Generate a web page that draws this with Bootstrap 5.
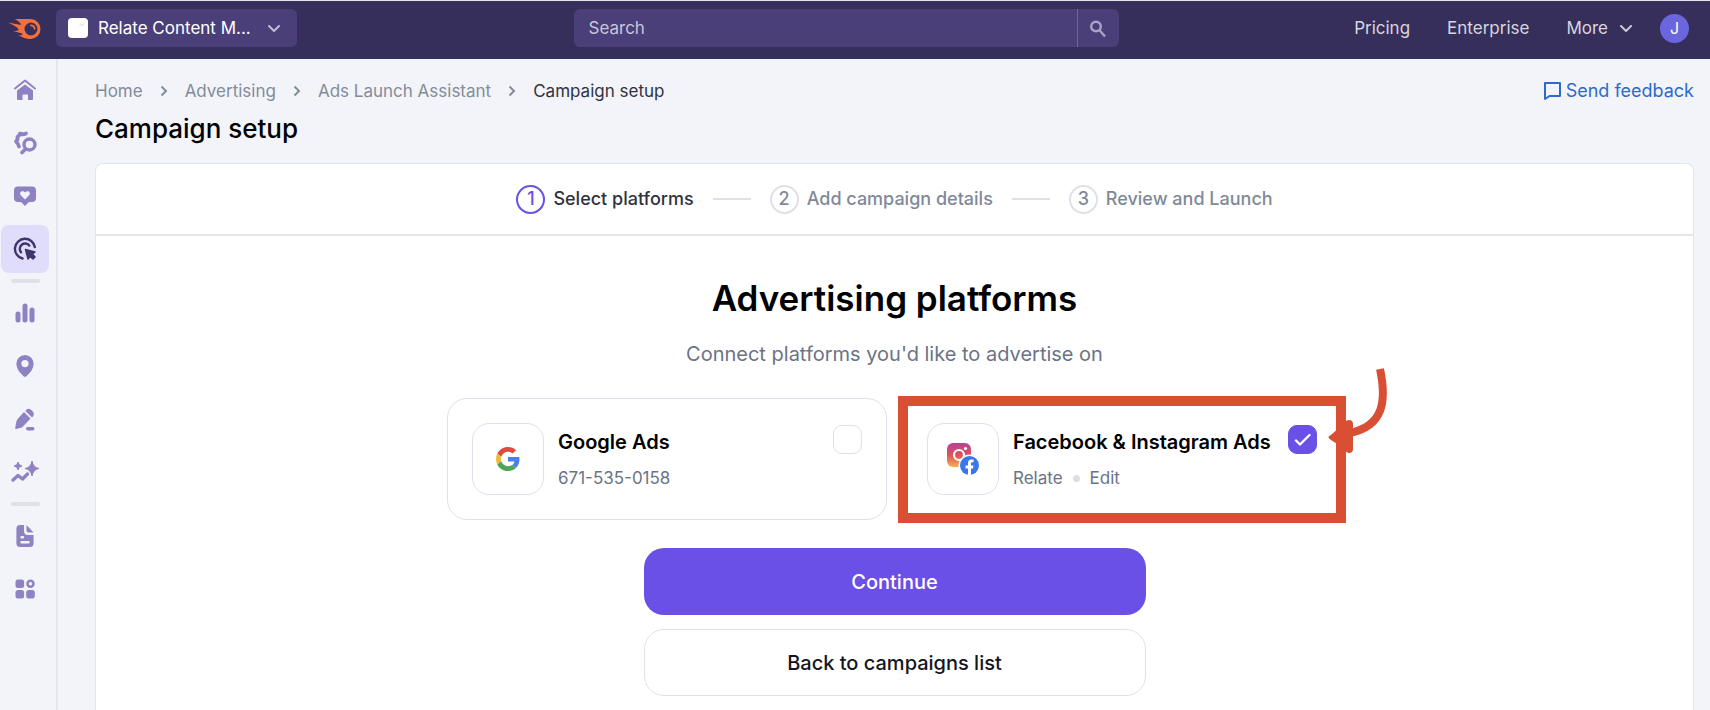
<!DOCTYPE html>
<html lang="en">
<head>
<meta charset="utf-8">
<meta name="viewport" content="width=device-width, initial-scale=1">
<title>Campaign setup</title>
<link href="https://cdn.jsdelivr.net/npm/bootstrap@5.3.0/dist/css/bootstrap.min.css" rel="stylesheet">
<style>
  body { background: #f3f4f9; font-family: Inter, "Open Sans", sans-serif; font-size: 18px; line-height: 24px; color: #2f3340; }
  a { text-decoration: none; }

  /* top bar */
  .topbar { height: 59px; padding: 0 21px 4px 3px; background: #372f5b; border-top: 1px solid #e4e4ea; font-size: 17px; }
  .topbar-side { flex: 1 1 0; min-width: 0; }
  .topbar-links { gap: 37px; }
  .brand-link { width: 53px; padding-left: 5px; }
  .project-btn { width: 241px; height: 38px; gap: 10px; border: 0; border-radius: 6px; background: #4b3f79; color: #fff; padding: 0 16px 0 12px; }
  .project-thumb { width: 20px; height: 20px; border-radius: 4px; background: #fff; }
  .search-box { width: 545px; height: 38px; border-radius: 6px; background: #4b3f79; overflow: hidden; }
  .search-box input { background: transparent; border: 0; color: #fff; padding: 0 15px; font-size: 17px; }
  .search-box input::placeholder { color: #c9c5da; opacity: 1; }
  .search-box button { width: 42px; border: 0; border-left: 1px solid #6f6596; background: transparent; color: #aaa3c6; }
  .topbar-link { color: #d7d5de; }
  .avatar { width: 29px; height: 29px; background: #6c66de; color: #fff; font-size: 16px; border: 0; }

  /* side rail */
  .rail { width: 58px; border-right: 2px solid #e4e6ee; padding: 7px 7px 0 1px; gap: 5px; }
  .rail-item { height: 48px; border-radius: 8px; color: #8f82c2; display: flex; align-items: center; justify-content: center; }
  .rail-item.current { background: #e0dcfb; color: #40346d; }
  .rail-sep { width: 29px; height: 4px; margin: 1px auto; border-radius: 2px; background: #dfe0e8; }

  /* content */
  .content { padding: 20px 16px 0 37px; }
  .crumbs { gap: 17px; font-size: 17px; }
  .crumbs a { color: #828c9b; }
  .feedback { color: #2d6ac9; }
  h1 { font-size: 26px; line-height: 32px; font-weight: 500; color: #000; margin: 10px 0 18px; }
  .panel { background: #fff; border: 1px solid #e4e6ee; border-bottom: 0; border-radius: 8px 8px 0 0; }
  .steps { height: 72px; border-bottom: 2px solid #e4e6ee; gap: 19px; font-weight: 500; color: #7f8999; }
  .step-num { width: 29px; height: 29px; border: 2px solid #e0e0ea; border-radius: 50%; }
  .step-now { color: #2f3340; }
  .step-now .step-num { border-color: #6a50e6; color: #6a50e6; }
  .step-line { width: 38px; height: 2px; background: #e0e0ea; }
  .setup { padding-top: 38px; }
  h2 { font-size: 35px; line-height: 48px; font-weight: 600; color: #000; }
  .intro { font-size: 20px; color: #6b7385; }
  .platforms { width: 100%; max-width: 895px; gap: 15px; }
  .platform { flex: 1 1 0; height: 122px; border: 1px solid #e0e1ec; border-radius: 20px; padding: 24px; }
  .platform-logo { width: 72px; height: 72px; border: 1px solid #e0e1ec; border-radius: 17px; }
  .platform-text { padding: 7px 0 0 14px; }
  .platform-name { font-size: 20px; font-weight: 600; color: #000; }
  .platform-info { font-size: 17px; }
  .platform-info, .platform-info a { color: #6b7385; }
  .dot { width: 7px; height: 7px; margin: 0 10px; border-radius: 50%; background: #dcdee8; }
  .form-check-input.pick { width: 29px; height: 29px; margin: 2px 0 0; border: 1px solid #dfe0ec; border-radius: 9px; flex-shrink: 0; }
  .form-check-input.pick:checked { background-color: #6a50e6; border-color: #6a50e6; background-size: 17px 17px;
    background-image: url("data:image/svg+xml,%3csvg xmlns='http://www.w3.org/2000/svg' viewBox='0 0 17 17'%3e%3cpath d='M2 9.500 6 13.500 15.500 4' fill='none' stroke='%23fff' stroke-width='2.400' stroke-linecap='round' stroke-linejoin='round'/%3e%3c/svg%3e"); }
  .actions { width: 100%; max-width: 502px; gap: 14px; }
  .action-btn { height: 67px; border-radius: 20px; font-size: 20px; font-weight: 500; }
  .action-main { --bs-btn-bg: #6a50e6; --bs-btn-color: #fff; --bs-btn-hover-bg: #5a41d4; --bs-btn-hover-color: #fff; }
  .action-back { --bs-btn-color: #14161f; --bs-btn-border-color: #e0e1ec; --bs-btn-hover-bg: #f7f7fb; }

  /* callout drawn over the second platform */
  .callout-frame { position: absolute; inset: -3px -5px -4px -5px; border: 10px solid #d94f34; pointer-events: none; }
  .callout-arrow { position: absolute; left: 423px; top: -32px; pointer-events: none; }
</style>
</head>
<body>
<div class="min-vh-100 d-flex flex-column">
  <header class="topbar d-flex align-items-center">
    <div class="topbar-side d-flex align-items-center">
      <a href="#" class="brand-link" aria-label="Dashboard">
        <svg width="34" height="22" viewBox="0 0 34 22" fill="#f2703d">
          <path fill-rule="evenodd" d="M0 4.500 13 7 Q13 4.500 7 1 H22.500 A10 10 0 0 1 22.500 21 C17 21 14 18.500 10 17.500 Q15.500 17.500 14 15.500 L5 13 Q11.500 13 10.500 11 Q8 8 0 4.500Z M23 4.500 A6.500 6.500 0 1 0 23 17.500 A6.500 6.500 0 1 0 23 4.500Z"/>
          <path d="M23 6.500 A4.500 4.500 0 0 1 27.500 11 C27.500 12 26 12 26 11 A3.500 3.500 0 0 0 23 8.200 C21.800 8.200 21.800 6.500 23 6.500Z"/>
        </svg>
      </a>
      <button type="button" class="project-btn d-flex align-items-center">
        <span class="project-thumb flex-shrink-0"><svg class="d-block" width="20" height="20" viewBox="0 0 20 20" fill="none" stroke="#bfe6c3"><path d="M11.500 8 13 6.500 14.500 7.500 16.500 5.500"/></svg></span>
        <span class="text-truncate">Relate Content M...</span>
        <svg class="ms-auto flex-shrink-0" width="14" height="9" viewBox="0 0 14 9" fill="none" stroke="#c3bdd9" stroke-width="2" stroke-linecap="round" stroke-linejoin="round"><path d="M2 2l5 5 5-5"/></svg>
      </button>
    </div>
    <form class="search-box d-flex" role="search">
      <input type="text" class="flex-grow-1" placeholder="Search" aria-label="Search">
      <button type="button" aria-label="Run search">
        <svg width="18" height="18" viewBox="0 0 18 18" fill="none" stroke="currentColor" stroke-width="2.400"><circle cx="7" cy="6.500" r="4.800"/><path d="M10.300 10 16 16.500"/></svg>
      </button>
    </form>
    <nav class="topbar-side d-flex align-items-center justify-content-end" aria-label="Account">
      <div class="topbar-links d-flex">
        <a href="#" class="topbar-link">Pricing</a>
        <a href="#" class="topbar-link">Enterprise</a>
        <a href="#" class="topbar-link">More<svg class="ms-2 me-4" width="20" height="9" viewBox="-4 0 20 9" fill="none" stroke="#c9c5da" stroke-width="2" stroke-linecap="round" stroke-linejoin="round"><path d="M1 1l5 5 5-5"/></svg></a>
      </div>
      <button type="button" class="avatar rounded-circle p-0">J</button>
    </nav>
  </header>

  <div class="d-flex flex-grow-1">
    <nav class="rail d-flex flex-column flex-shrink-0" aria-label="Sections">
      <a href="#" class="rail-item" aria-label="Home">
        <svg width="24" height="24" viewBox="0 0 24 24" fill="currentColor"><path d="M2 10.500 12 2.500 22 10.500" fill="none" stroke="currentColor" stroke-width="2" stroke-linecap="round" stroke-linejoin="round"/><path d="M4 12.500 12 6.500 20 12.500V21Q20 22 19 22H15V17.500Q15 16.500 14 16.500H10.500Q9.500 16.500 9.500 17.500V22H5Q4 22 4 21Z"/></svg>
      </a>
      <a href="#" class="rail-item" aria-label="SEO">
        <svg width="26" height="24" viewBox="0 0 26 24" fill="none" stroke="currentColor" stroke-linecap="round" stroke-linejoin="round"><circle cx="17.500" cy="13.500" r="5.500" stroke-width="3.400"/><path d="M13.500 18 10 21.500" stroke-width="3.600"/><path d="M7 15.500 Q6.500 13 4 10.500 Q6 9 5.500 6 L7.500 4 Q8.500 3 8 2.500 Q10.500 4 14 2.500" stroke-width="3.800"/></svg>
      </a>
      <a href="#" class="rail-item" aria-label="Social">
        <svg width="24" height="24" viewBox="0 0 24 24" fill="currentColor"><path fill-rule="evenodd" d="M5 2.500H19Q23 2.500 23 6.500V14Q23 18 19 18H17Q15 18 14 20L12 22 10 20Q9 18 7 18H5Q1 18 1 14V6.500Q1 2.500 5 2.500Z M12 15.500 L16.200 11.300 C18.500 8.500 14.500 5.500 12 8.500 C9.500 5.500 5.500 8.500 7.800 11.300Z"/></svg>
      </a>
      <a href="#" class="rail-item current" aria-label="Advertising" aria-current="page">
        <svg width="24" height="24" viewBox="0 0 24 24" fill="none" stroke="currentColor" stroke-width="2.400" stroke-linecap="round" stroke-linejoin="round"><path d="M9.500 21.500A10 10 0 1 1 21.800 10"/><path d="M8 15.300A5.300 5.300 0 1 1 16.300 8.500"/><path d="M12.500 12.500 22 15 19.500 17 22 20 20 22 17 19.500 15 22Z" fill="currentColor" stroke-width="1.500"/></svg>
      </a>
      <div class="rail-sep"></div>
      <a href="#" class="rail-item" aria-label="Traffic">
        <svg width="20" height="20" viewBox="0 0 20 20" fill="currentColor"><rect x=".5" y="8.500" width="5" height="11" rx="2.500"/><rect x="7.500" y=".5" width="5" height="19" rx="2.500"/><rect x="14.500" y="4.500" width="5" height="15" rx="2.500"/></svg>
      </a>
      <a href="#" class="rail-item" aria-label="Local">
        <svg width="18" height="22" viewBox="0 0 18 22" fill="currentColor"><path fill-rule="evenodd" d="M9 0A8.600 8.600 0 0 1 17.600 8.600C17.600 14 14 18 10.500 21.200Q9 22.400 7.500 21.200C4 18 .4 14 .4 8.600A8.600 8.600 0 0 1 9 0Z M9 5A3.600 3.600 0 1 0 9 12.200 3.600 3.600 0 1 0 9 5Z"/></svg>
      </a>
      <a href="#" class="rail-item" aria-label="Content">
        <svg width="22" height="24" viewBox="0 0 22 24" fill="currentColor"><path d="M10 5 16.500 11.500 9 19.500Q8 20.800 6 21L2 22Q1 22 1.200 21L2.200 15.500Q2.500 13.500 4 11.500Z"/><path d="M12 3Q15 .5 18 3.500T19 9.500L18 10.500 11.500 4Z"/><rect x="12" y="20" width="8.500" height="3.600" rx="1.800"/></svg>
      </a>
      <a href="#" class="rail-item" aria-label="Trends">
        <svg width="30" height="24" viewBox="0 0 30 24" fill="currentColor"><path d="M3 20 8 15.500 12.500 19 17.500 14" fill="none" stroke="currentColor" stroke-width="3.400" stroke-linecap="round" stroke-linejoin="round"/><path d="M22 1Q23 7.500 29 8.500 23 9.500 22 16 21 9.500 15 8.500 21 7.500 22 1Z" stroke="currentColor"/><path d="M8 2Q8.500 5.500 12 6 8.500 6.500 8 10 7.500 6.500 4 6 7.500 5.500 8 2Z" stroke="currentColor"/></svg>
      </a>
      <div class="rail-sep"></div>
      <a href="#" class="rail-item" aria-label="Reports">
        <svg width="18" height="22" viewBox="0 0 18 22" fill="currentColor"><path fill-rule="evenodd" d="M4 0H8V6Q8 10 12 10H17.600V18Q17.600 22 14 22H4Q.4 22 .4 18V4Q.4 0 4 0Z M5.500 11A1.200 1.200 0 0 0 5.500 13.400H7A1.200 1.200 0 0 0 7 11Z M5.500 16A1.200 1.200 0 0 0 5.500 18.400H12.500A1.200 1.200 0 0 0 12.500 16Z"/><path d="M10.500 0 17.600 7.500H12.500Q10.500 7.500 10.500 5.500Z"/></svg>
      </a>
      <a href="#" class="rail-item" aria-label="Apps">
        <svg width="20" height="20" viewBox="0 0 20 20" fill="currentColor"><rect x=".5" y=".5" width="8.600" height="8.600" rx="2.500"/><rect x=".5" y="11" width="8.600" height="8.600" rx="2.500"/><rect x="11.200" y="11" width="8.600" height="8.600" rx="2.500"/><circle cx="15.500" cy="4.800" r="3" fill="none" stroke="currentColor" stroke-width="2.500"/></svg>
      </a>
    </nav>

    <main class="content flex-grow-1 d-flex flex-column">
      <div class="d-flex align-items-center justify-content-between">
        <nav class="crumbs d-flex align-items-center" aria-label="breadcrumb">
          <a href="#">Home</a>
          <svg width="8" height="12" viewBox="0 0 8 12" fill="none" stroke="#828c9b" stroke-width="2"><path d="M1.500 1.500 6 6 1.500 10.500"/></svg>
          <a href="#">Advertising</a>
          <svg width="8" height="12" viewBox="0 0 8 12" fill="none" stroke="#828c9b" stroke-width="2"><path d="M1.500 1.500 6 6 1.500 10.500"/></svg>
          <a href="#">Ads Launch Assistant</a>
          <svg width="8" height="12" viewBox="0 0 8 12" fill="none" stroke="#828c9b" stroke-width="2"><path d="M1.500 1.500 6 6 1.500 10.500"/></svg>
          <span aria-current="page">Campaign setup</span>
        </nav>
        <a href="#" class="feedback d-flex align-items-center gap-1">
          <svg width="19" height="20" viewBox="0 0 19 20" fill="none" stroke="currentColor" stroke-width="2" stroke-linejoin="round"><path d="M2 2H17V15H6.500L2 18Z"/></svg>
          Send feedback
        </a>
      </div>
      <h1>Campaign setup</h1>

      <section class="panel flex-grow-1">
        <div class="steps d-flex align-items-center justify-content-center">
          <div class="step-now d-flex align-items-center gap-2"><span class="step-num d-flex align-items-center justify-content-center">1</span>Select platforms</div>
          <span class="step-line"></span>
          <div class="d-flex align-items-center gap-2"><span class="step-num d-flex align-items-center justify-content-center">2</span>Add campaign details</div>
          <span class="step-line"></span>
          <div class="d-flex align-items-center gap-2"><span class="step-num d-flex align-items-center justify-content-center">3</span>Review and Launch</div>
        </div>

        <div class="setup d-flex flex-column align-items-center">
          <h2 class="mb-0">Advertising platforms</h2>
          <p class="intro mt-3 mb-0 pt-1">Connect platforms you'd like to advertise on</p>

          <div class="platforms d-flex mt-4 pt-2">
            <div class="platform d-flex align-items-start">
              <div class="platform-logo d-flex align-items-center justify-content-center flex-shrink-0">
                <svg width="24" height="24" viewBox="0 0 48 48"><path fill="#dc4b3e" d="M24 9.500c3.540 0 6.710 1.220 9.210 3.600l6.850-6.850C35.900 2.380 30.470 0 24 0 14.620 0 6.510 5.380 2.560 13.220l7.980 6.190C12.430 13.720 17.740 9.500 24 9.500z"/><path fill="#4a80ee" d="M46.980 24.550c0-1.570-.15-3.090-.38-4.550H24v9.020h12.940c-.58 2.960-2.260 5.480-4.780 7.180l7.730 6c4.510-4.180 7.090-10.360 7.090-17.650z"/><path fill="#f0b93a" d="M10.530 28.590c-.48-1.450-.76-2.990-.76-4.590s.27-3.140.76-4.590l-7.980-6.190C.92 16.460 0 20.120 0 24c0 3.880.92 7.540 2.560 10.780l7.970-6.190z"/><path fill="#4ea557" d="M24 48c6.480 0 11.930-2.130 15.890-5.810l-7.730-6c-2.150 1.450-4.920 2.300-8.160 2.300-6.260 0-11.570-4.220-13.470-9.910l-7.980 6.190C6.510 42.620 14.620 48 24 48z"/></svg>
              </div>
              <div class="platform-text flex-grow-1">
                <label class="platform-name d-block" for="pick-google">Google Ads</label>
                <div class="platform-info mt-2 pt-1">671-535-0158</div>
              </div>
              <input class="form-check-input pick" type="checkbox" id="pick-google">
            </div>

            <div class="platform position-relative d-flex align-items-start">
              <div class="platform-logo d-flex align-items-center justify-content-center flex-shrink-0">
                <svg width="32" height="32" viewBox="0 0 32 32">
                  <defs><linearGradient id="insta" x1="0" y1="0" x2="0" y2="1"><stop offset="0" stop-color="#b9429a"/><stop offset=".5" stop-color="#dd5258"/><stop offset="1" stop-color="#f5b04f"/></linearGradient></defs>
                  <rect width="24" height="24" rx="6" fill="url(#insta)"/>
                  <circle cx="12" cy="12" r="5" fill="none" stroke="#fff" stroke-width="2.200"/><circle cx="18.500" cy="5.500" r="1.600" fill="#fff"/>
                  <circle cx="22.500" cy="22.500" r="11" fill="#fff"/><circle cx="22.500" cy="22.500" r="9.500" fill="#3a76ee"/>
                  <path d="M21 32V25.500H18.500V22.500H21V20Q21 16.500 24.500 16.500H26.500V19.200H25Q24 19.200 24 20.500V22.500H26.500L26 25.500H24V32Z" fill="#fff"/>
                </svg>
              </div>
              <div class="platform-text flex-grow-1">
                <label class="platform-name d-block text-nowrap" for="pick-meta">Facebook &amp; Instagram Ads</label>
                <div class="platform-info mt-2 pt-1 d-flex align-items-center">Relate<span class="dot"></span><a href="#">Edit</a></div>
              </div>
              <input class="form-check-input pick" type="checkbox" id="pick-meta" checked>
              <div class="callout-frame"></div>
              <svg class="callout-arrow" width="66" height="90" viewBox="0 0 66 90"><path d="M54 2C61 35 57 59 24 66" fill="none" stroke="#d94f34" stroke-width="8"/><path d="M5 68 18 56Q20 53 23 53Q27 53 27 57V82Q27 86 23 86Q20 86 19 82L5 73Q0 70 5 68Z" fill="#d94f34"/></svg>
            </div>
          </div>

          <div class="actions d-flex flex-column mt-4 pt-1 pb-2">
            <button type="button" class="btn action-btn action-main">Continue</button>
            <button type="button" class="btn action-btn action-back">Back to campaigns list</button>
          </div>
        </div>
      </section>
    </main>
  </div>
</div>
<script src="https://cdn.jsdelivr.net/npm/bootstrap@5.3.0/dist/js/bootstrap.bundle.min.js"></script>
</body>
</html>
